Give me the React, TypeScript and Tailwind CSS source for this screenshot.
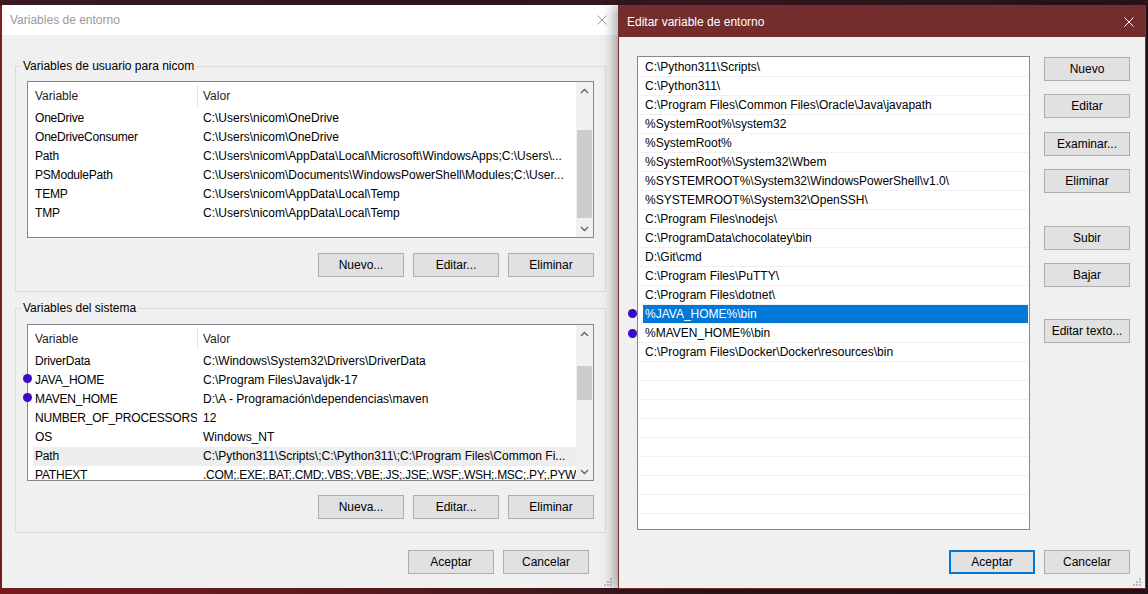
import React from 'react';

type BtnProps = { label: string; className?: string; focused?: boolean };

function Btn({ label, className = '', focused = false }: BtnProps) {
  return (
    <div
      className={`w-[86px] h-[24px] shrink-0 flex items-center justify-center bg-[#e1e1e1] text-black ${
        focused ? 'border-2 border-[#0078d7]' : 'border border-[#adadad]'
      } ${className}`}
    >
      {label}
    </div>
  );
}

function Chevron({ up }: { up?: boolean }) {
  return (
    <svg width="9" height="6" viewBox="0 0 9 6">
      <path d={up ? 'M1 5 L4.5 1.5 L8 5' : 'M1 1 L4.5 4.5 L8 1'} stroke="#606060" strokeWidth="1.3" fill="none" />
    </svg>
  );
}

function CloseX({ color }: { color: string }) {
  return (
    <svg width="10" height="10" viewBox="0 0 10 10">
      <path d="M0.5 0.5 L9.5 9.5 M9.5 0.5 L0.5 9.5" stroke={color} strokeWidth="1" />
    </svg>
  );
}

function Grip({ className = '' }: { className?: string }) {
  return (
    <svg width="8" height="8" viewBox="0 0 8 8" className={className}>
      <rect x="6" y="0" width="2" height="2" fill="#bdbdbd" />
      <rect x="6" y="3" width="2" height="2" fill="#bdbdbd" />
      <rect x="3" y="3" width="2" height="2" fill="#bdbdbd" />
      <rect x="6" y="6" width="2" height="2" fill="#bdbdbd" />
      <rect x="3" y="6" width="2" height="2" fill="#bdbdbd" />
      <rect x="0" y="6" width="2" height="2" fill="#bdbdbd" />
    </svg>
  );
}

type Row = { name: string; value: string; sel?: boolean; tight?: boolean };

const userVars: Row[] = [
  { name: 'OneDrive', value: 'C:\\Users\\nicom\\OneDrive' },
  { name: 'OneDriveConsumer', value: 'C:\\Users\\nicom\\OneDrive' },
  { name: 'Path', value: 'C:\\Users\\nicom\\AppData\\Local\\Microsoft\\WindowsApps;C:\\Users\\...' },
  { name: 'PSModulePath', value: 'C:\\Users\\nicom\\Documents\\WindowsPowerShell\\Modules;C:\\User...' },
  { name: 'TEMP', value: 'C:\\Users\\nicom\\AppData\\Local\\Temp' },
  { name: 'TMP', value: 'C:\\Users\\nicom\\AppData\\Local\\Temp' },
];

const systemVars: Row[] = [
  { name: 'DriverData', value: 'C:\\Windows\\System32\\Drivers\\DriverData' },
  { name: 'JAVA_HOME', value: 'C:\\Program Files\\Java\\jdk-17' },
  { name: 'MAVEN_HOME', value: 'D:\\A - Programación\\dependencias\\maven' },
  { name: 'NUMBER_OF_PROCESSORS', value: '12' },
  { name: 'OS', value: 'Windows_NT' },
  { name: 'Path', value: 'C:\\Python311\\Scripts\\;C:\\Python311\\;C:\\Program Files\\Common Fi...', sel: true },
  { name: 'PATHEXT', value: '.COM;.EXE;.BAT;.CMD;.VBS;.VBE;.JS;.JSE;.WSF;.WSH;.MSC;.PY;.PYW', tight: true },
];

const pathEntries = [
  'C:\\Python311\\Scripts\\',
  'C:\\Python311\\',
  'C:\\Program Files\\Common Files\\Oracle\\Java\\javapath',
  '%SystemRoot%\\system32',
  '%SystemRoot%',
  '%SystemRoot%\\System32\\Wbem',
  '%SYSTEMROOT%\\System32\\WindowsPowerShell\\v1.0\\',
  '%SYSTEMROOT%\\System32\\OpenSSH\\',
  'C:\\Program Files\\nodejs\\',
  'C:\\ProgramData\\chocolatey\\bin',
  'D:\\Git\\cmd',
  'C:\\Program Files\\PuTTY\\',
  'C:\\Program Files\\dotnet\\',
  '%JAVA_HOME%\\bin',
  '%MAVEN_HOME%\\bin',
  'C:\\Program Files\\Docker\\Docker\\resources\\bin',
  '', '', '', '', '', '', '', '', '', '',
];

function VarList({ rows, thumb }: { rows: Row[]; thumb: string }) {
  return (
    <div className="h-[157px] border border-[#828790] bg-white flex overflow-hidden">
      <div className="flex-1 flex flex-col min-w-0">
        <div className="h-[27px] shrink-0 flex items-center text-[#1e1e1e]">
          <div className="w-[169px] pl-[7px]">Variable</div>
          <div className="w-px h-[22px] bg-[#e5e5e5]" />
          <div className="pl-[5px]">Valor</div>
        </div>
        {rows.map((r) => (
          <div
            key={r.name}
            className={`ml-[5px] h-[19px] shrink-0 flex items-center leading-[15px] ${r.sel ? 'bg-[#eeeeee]' : ''}`}
          >
            <div className="w-[164px] shrink-0 pl-[2px] whitespace-nowrap overflow-hidden tracking-[-0.2px]">{r.name}</div>
            <div
              className={`flex-1 min-w-0 pl-[6px] whitespace-nowrap overflow-hidden ${
                r.tight ? 'tracking-[-0.3px]' : ''
              }`}
            >
              {r.value}
            </div>
          </div>
        ))}
      </div>
      <div className="w-[17px] shrink-0 bg-[#f0f0f0] flex flex-col">
        <div className="h-[17px] flex items-center justify-center">
          <Chevron up />
        </div>
        <div className="flex-1">
          <div className={`mx-[1px] bg-[#cdcdcd] ${thumb}`} />
        </div>
        <div className="h-[17px] flex items-center justify-center">
          <Chevron />
        </div>
      </div>
    </div>
  );
}

function Group({ title, children, className = '' }: { title: string; children: React.ReactNode; className?: string }) {
  return (
    <fieldset className={`ml-[13px] w-[591px] min-w-0 border border-[#dcdcdc] px-[11px] ${className}`}>
      <legend className="ml-[-6px] px-[2px] leading-[14px] text-black">{title}</legend>
      {children}
    </fieldset>
  );
}

function EnvDialog() {
  return (
    <div className="relative w-[616px] h-[583px] shrink-0 bg-[#f0f0f0] flex flex-col">
      <div className="h-[30px] shrink-0 bg-white flex items-center justify-between pl-[8px] pr-[11px] text-[#9a9a9a]">
        <span>Variables de entorno</span>
        <CloseX color="#9a9a9a" />
      </div>

      <Group title="Variables de usuario para nicom" className="mt-[24px] pt-[8px] pb-[14px]">
        <VarList rows={userVars} thumb="mt-[31px] h-[88px]" />
        <div className="mt-[15px] flex justify-end gap-[9px]">
          <Btn label="Nuevo..." />
          <Btn label="Editar..." />
          <Btn label="Eliminar" />
        </div>
      </Group>

      <Group title="Variables del sistema" className="mt-[9px] pt-[9px] pb-[13px]">
        <VarList rows={systemVars} thumb="mt-[24px] h-[34px]" />
        <div className="mt-[14px] flex justify-end gap-[9px]">
          <Btn label="Nueva..." />
          <Btn label="Editar..." />
          <Btn label="Eliminar" />
        </div>
      </Group>

      <div className="mt-[17px] flex justify-end gap-[9px] pr-[29px]">
        <Btn label="Aceptar" />
        <Btn label="Cancelar" />
      </div>

      <Grip className="absolute right-[6px] bottom-[2px]" />
    </div>
  );
}

function EditDialog() {
  return (
    <div className="relative w-[528px] h-[584px] shrink-0 border border-[#7a2e2e] bg-[#f0f0f0] flex flex-col shadow-[-4px_0_12px_rgba(0,0,0,0.35)]">
      <div className="h-[31px] shrink-0 bg-[#722d2c] flex items-center justify-between pl-[8px] pr-[11px] text-white">
        <span>Editar variable de entorno</span>
        <CloseX color="#ffffff" />
      </div>

      <div className="flex pl-[18px] pr-[15px] pt-[19px]">
        <div className="w-[393px] h-[474px] border border-[#828790] bg-white pt-[1px] overflow-hidden">
          {pathEntries.map((p, i) => (
            <div key={i} className="h-[19px] border-b border-[#f0f0f0] mr-px">
              <div
                className={`ml-[5px] h-full flex items-center pl-[2px] whitespace-nowrap leading-[15px] ${
                  i === 13 ? 'bg-[#0078d7] text-white' : 'text-black'
                }`}
              >
                {p}
              </div>
            </div>
          ))}
        </div>

        <div className="ml-[14px] flex flex-col">
          <Btn label="Nuevo" className="mt-[1px]" />
          <Btn label="Editar" className="mt-[13px]" />
          <Btn label="Examinar..." className="mt-[14px]" />
          <Btn label="Eliminar" className="mt-[13px]" />
          <Btn label="Subir" className="mt-[33px]" />
          <Btn label="Bajar" className="mt-[13px]" />
          <Btn label="Editar texto..." className="mt-[32px]" />
        </div>
      </div>

      <div className="mt-[20px] flex justify-end gap-[9px] pr-[15px]">
        <Btn label="Aceptar" focused />
        <Btn label="Cancelar" />
      </div>

      <Grip className="absolute right-[4px] bottom-[2px]" />
    </div>
  );
}

export default function App() {
  return (
    <div className="relative w-[1148px] h-[594px] overflow-hidden bg-[linear-gradient(100deg,#7e1c1e_0%,#5a1a1f_35%,#2d171b_65%,#231418_100%)] font-['Liberation_Sans',Arial,sans-serif] text-[12px] leading-none">
      <div className="absolute inset-x-0 top-0 h-[6px] bg-[linear-gradient(90deg,#3a1a20,#2a161b_40%,#3b1a1f_60%,#2a1519)]" />
      <div className="relative flex pt-[5px] pl-[2px]">
        <EnvDialog />
        <EditDialog />
      </div>

      {/* marcas a mano sobre la captura */}
      <div className="absolute left-[23px] top-[374px] w-[9px] h-[9px] rounded-full bg-[#3a0bc4]" />
      <div className="absolute left-[23px] top-[393px] w-[9px] h-[9px] rounded-full bg-[#3a0bc4]" />
      <div className="absolute left-[628px] top-[309px] w-[9px] h-[9px] rounded-full bg-[#3a0bc4]" />
      <div className="absolute left-[628px] top-[329px] w-[9px] h-[9px] rounded-full bg-[#3a0bc4]" />
    </div>
  );
}
